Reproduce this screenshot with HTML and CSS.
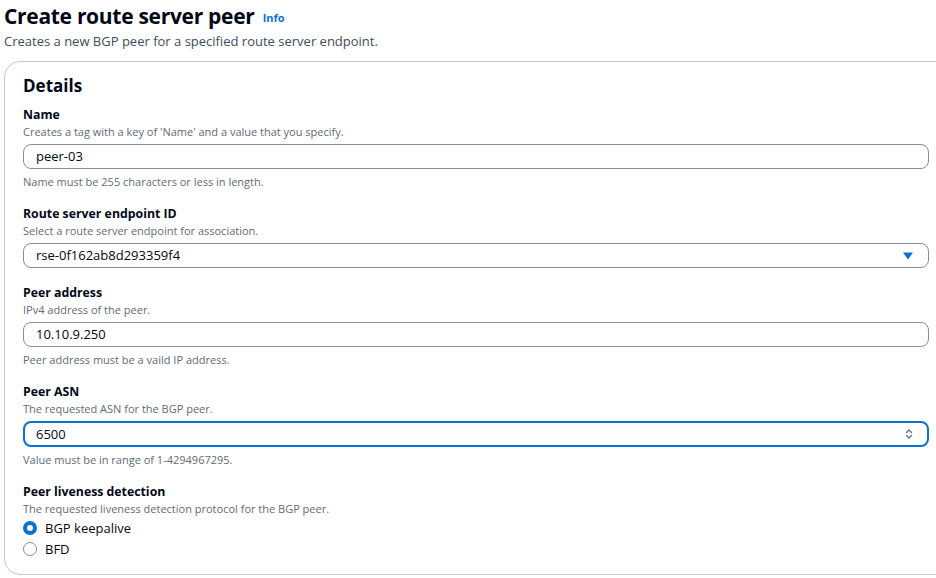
FILE: index.html
```html
<!DOCTYPE html>
<html>
<head>
<meta charset="utf-8">
<link rel="stylesheet" href="styles.css">
</head>
<body>
<div class="page">
  <header class="head">
    <h1 class="title">Create route server peer <a class="info">Info</a></h1>
    <p class="subtitle">Creates a new BGP peer for a specified route server endpoint.</p>
  </header>
  <section class="card">
    <h2 class="card-title">Details</h2>
    <div class="field">
      <div class="label">Name</div>
      <div class="desc">Creates a tag with a key of 'Name' and a value that you specify.</div>
      <div class="input">peer-03</div>
      <div class="constraint">Name must be 255 characters or less in length.</div>
    </div>
    <div class="field">
      <div class="label">Route server endpoint ID</div>
      <div class="desc">Select a route server endpoint for association.</div>
      <div class="input select"><span>rse-0f162ab8d293359f4</span>
        <svg class="caret" width="12" height="10" viewBox="0 0 12 10"><path d="M1 1.5h10L6 8.5z" fill="#0972d3"/></svg>
      </div>
    </div>
    <div class="field">
      <div class="label">Peer address</div>
      <div class="desc">IPv4 address of the peer.</div>
      <div class="input">10.10.9.250</div>
      <div class="constraint">Peer address must be a vaild IP address.</div>
    </div>
    <div class="field">
      <div class="label">Peer ASN</div>
      <div class="desc">The requested ASN for the BGP peer.</div>
      <div class="input focus"><span>6500</span>
        <svg class="spin" width="10" height="14" viewBox="0 0 10 14"><path d="M2.5 5.5L5 3l2.5 2.5M2.5 8.5L5 11l2.5-2.5" fill="none" stroke="#5f6b7a" stroke-width="1.2" stroke-linecap="round" stroke-linejoin="round"/></svg>
      </div>
      <div class="constraint">Value must be in range of 1-4294967295.</div>
    </div>
    <div class="field">
      <div class="label">Peer liveness detection</div>
      <div class="desc">The requested liveness detection protocol for the BGP peer.</div>
      <div class="radios">
        <div class="radio"><span class="dot on"></span>BGP keepalive</div>
        <div class="radio"><span class="dot"></span>BFD</div>
      </div>
    </div>
  </section>
</div>
</body>
</html>
```
FILE: styles.css
```css
* { box-sizing: border-box; }
html, body { margin: 0; padding: 0; }
body {
  background: #ffffff;
  font-family: "Open Sans", "Noto Sans", sans-serif;
  color: #000716;
  width: 936px;
  height: 578px;
  overflow: hidden;
}
.page { padding: 2px 0 0 4px; }
.title {
  margin: 0;
  font-size: 21px;
  font-weight: 700;
  line-height: 28px;
  color: #000716;
  letter-spacing: -0.3px;
}
.info {
  font-size: 11px;
  font-weight: 700;
  color: #0972d3;
  margin-left: 3px;
  vertical-align: 2px;
  letter-spacing: 0;
}
.subtitle {
  margin: 0;
  font-size: 13px;
  line-height: 18px;
  color: #414d5c;
}
.card {
  margin-top: 11px;
  margin-right: -20px;
  border: 1px solid #c6c6cd;
  border-radius: 16px;
  background: #fff;
  padding: 12px 27px 12px 18px;
  height: 514px;
}
.card-title {
  margin: 0 0 8px 0;
  font-size: 17px;
  font-weight: 700;
  line-height: 24px;
}
.field {
  display: flex;
  flex-direction: column;
  margin-bottom: 15px;
}
.label {
  font-size: 12.3px;
  font-weight: 700;
  line-height: 18px;
}
.desc, .constraint {
  font-size: 11px;
  line-height: 16px;
  color: #5f6b7a;
}
.constraint { margin-top: 5px; }
.input {
  margin-top: 4px;
  height: 25px;
  border: 1px solid #8c8c94;
  border-radius: 8px;
  padding: 0 12px;
  font-size: 13px;
  line-height: 23px;
  display: flex;
  align-items: center;
  justify-content: space-between;
  width: 906px;
}
.input.select { margin-bottom: 1px; }
.input.focus {
  border: 2px solid #0972d3;
  padding: 0 11px;
  height: 26px;
}
.caret { margin-right: 2px; }
.spin { margin-right: 2px; }
.radios { margin-top: 3px; display: flex; flex-direction: column; gap: 5px; }
.radio {
  display: flex;
  align-items: center;
  font-size: 13px;
  line-height: 16px;
}
.dot {
  width: 14px;
  height: 14px;
  border-radius: 50%;
  border: 1px solid #8c8c94;
  margin-right: 8px;
  flex: none;
}
.dot.on {
  border: 4px solid #0972d3;
}
```
